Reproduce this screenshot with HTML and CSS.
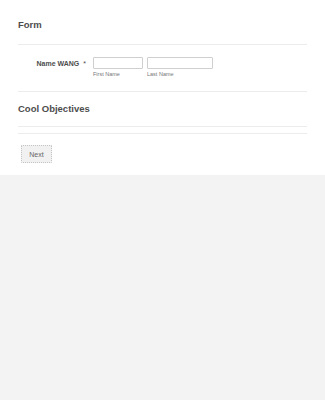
FILE: index.html
```html
<!DOCTYPE html>
<html lang="en">
<head>
    <meta charset="UTF-8">
    <meta name="viewport" content="width=device-width, initial-scale=1.0">
    <title>Form</title>
    <link rel="stylesheet" href="styles.css">
</head>
<body>
    <form class="form-card">
        <div class="form-header">
            <h1>Form</h1>
        </div>
        <div class="name-row">
            <label class="name-label">Name WANG<span class="required">*</span></label>
            <div class="name-fields">
                <div class="field first">
                    <input type="text" id="first">
                    <label for="first">First Name</label>
                </div>
                <div class="field last">
                    <input type="text" id="last">
                    <label for="last">Last Name</label>
                </div>
            </div>
        </div>
        <div class="section-head">
            <h2>Cool Objectives</h2>
        </div>
        <div class="page-break"></div>
        <div class="buttons">
            <button type="button">Next</button>
        </div>
    </form>
</body>
</html>
```

FILE: styles.css
```css
body {
    margin: 0;
    font-family: "Liberation Sans", Arial, sans-serif;
    background-color: #f3f3f3;
    color: #555;
}
.form-card {
    background-color: #fff;
    padding: 0 18px 12px;
}
.form-header {
    padding: 19px 0 13px;
    border-bottom: 1px solid #ececec;
}
.form-header h1,
.section-head h2 {
    margin: 0;
    font-size: 9.5px;
    line-height: 12px;
    font-weight: bold;
    color: #4d4d4d;
}
.name-row {
    display: flex;
    padding: 12px 0 0;
    height: 34px;
    border-bottom: 1px solid #ececec;
}
.name-label {
    width: 68px;
    padding-top: 1px;
    padding-right: 7px;
    text-align: right;
    font-size: 7px;
    font-weight: bold;
    line-height: 11px;
    color: #4d4d4d;
}
.required {
    margin-left: 4px;
    font-weight: normal;
}
.name-fields {
    display: flex;
    gap: 4px;
}
.field {
    display: flex;
    flex-direction: column;
}
.field input {
    box-sizing: border-box;
    height: 12px;
    margin: 0;
    padding: 0;
    border: 1px solid #cfcfcf;
    border-radius: 1px;
    background-color: #fff;
}
.field.first input {
    width: 50px;
}
.field.last input {
    width: 66px;
}
.field label {
    font-size: 5.5px;
    line-height: 8px;
    margin-top: 1px;
    color: #777;
}
.section-head {
    padding: 11px 0;
    border-bottom: 1px solid #ececec;
}
.page-break {
    height: 6px;
    border-bottom: 1px solid #ececec;
}
.buttons {
    display: flex;
    padding: 11px 0 0 3px;
}
.buttons button {
    width: 31px;
    height: 18px;
    padding: 0;
    font-family: "Liberation Sans", Arial, sans-serif;
    font-size: 7px;
    color: #666;
    background-color: #f1f1f1;
    border: 1px dotted #c4c4c4;
    border-radius: 1px;
}
```
